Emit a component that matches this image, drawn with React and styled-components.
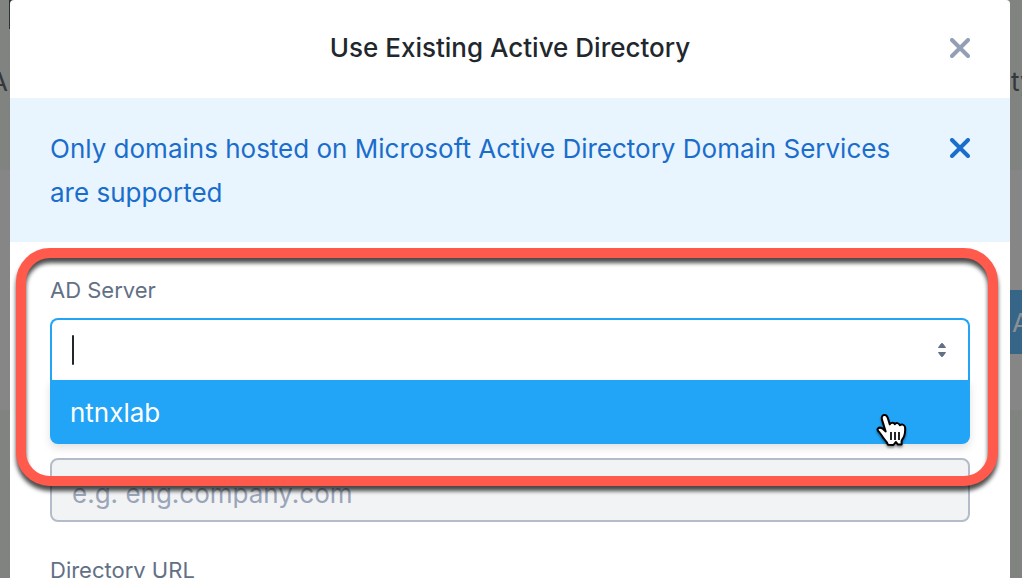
import React from 'react';
import styled, { createGlobalStyle } from 'styled-components';

const GlobalStyle = createGlobalStyle`
  * { box-sizing: border-box; }
  body {
    margin: 0;
    background: #808380;
    font-family: Inter, "Liberation Sans", sans-serif;
    font-size: 26px;
    color: #22272e;
  }
`;

const Page = styled.div`
  position: relative;
  height: 100vh;
  overflow: hidden;
  background: #808380;
`;

const PageHeader = styled.div`
  display: flex;
  justify-content: space-between;
  height: 170px;
  padding-top: 66px;
  line-height: 32px;
  color: #34373b;
`;

const ClippedWord = styled.span`
  display: flex;
  justify-content: ${(p) => (p.$side === 'left' ? 'flex-end' : 'flex-start')};
  width: ${(p) => (p.$side === 'left' ? '8px' : '11px')};
  overflow: hidden;
`;

const PageToolbar = styled.div`
  display: flex;
  justify-content: flex-end;
  height: 240px;
  padding-top: 120px;
  background: #868686;
`;

const PageButton = styled.button`
  width: 12px;
  height: 64px;
  padding: 0 2px;
  border: 0;
  overflow: hidden;
  background: #376587;
  color: #8b9093;
  font: inherit;
  text-align: left;
`;

const PageDivider = styled.div`
  position: absolute;
  top: 0;
  left: 9px;
  width: 6px;
  height: 29px;
  background: #2f3235;
`;

const Modal = styled.section`
  position: absolute;
  inset: 0 12px 0 10px;
  overflow: hidden;
  border-radius: 4px 4px 0 0;
  background: #fff;
`;

const ModalHeader = styled.header`
  display: grid;
  grid-template-columns: 24px 1fr 24px;
  align-items: center;
  height: 98px;
  padding: 0 38px 2px;
`;

const Title = styled.h1`
  grid-column: 2;
  margin: 0;
  font-size: 26px;
  font-weight: 500;
  line-height: 32px;
  text-align: center;
`;

const CloseButton = styled.button`
  display: flex;
  flex: none;
  width: 24px;
  height: 24px;
  padding: 2px;
  border: 0;
  background: none;
  color: ${(p) => (p.$tone === 'info' ? '#1b6dcc' : '#929fb5')};
`;

const Alert = styled.div`
  display: flex;
  justify-content: space-between;
  gap: 24px;
  padding: 29px 38px 27px 40px;
  background: #e8f5ff;
  color: #1b6dcc;

  ${CloseButton} {
    margin-top: 9px;
  }
`;

const AlertText = styled.p`
  max-width: 860px;
  margin: 0;
  line-height: 44px;
`;

const Form = styled.form`
  position: relative;
  display: flex;
  flex-direction: column;
  padding: 32px 40px;
`;

const Label = styled.label`
  margin-bottom: 12px;
  font-size: 22px;
  line-height: 32px;
  color: #627086;
`;

const Combo = styled.div`
  position: relative;
  display: flex;
  align-items: center;
  height: 62px;
  padding: 0 20px;
  border: 2px solid #22a5f7;
  border-bottom: 0;
  border-radius: 8px 8px 0 0;
  background: #fff;
`;

const ComboInput = styled.input`
  flex: 1;
  min-width: 0;
  height: 56px;
  padding: 0;
  border: 0;
  outline: 0;
  background: none;
  font: inherit;
`;

const TextCaret = styled.span`
  width: 2px;
  height: 30px;
  border-radius: 1px;
  background: #22272e;
`;

const OptionList = styled.ul`
  position: relative;
  margin: 0 0 14px;
  padding: 0;
  list-style: none;
  border-radius: 0 0 8px 8px;
  background: #22a5f7;
  box-shadow: 0 4px 8px rgba(0, 0, 0, 0.12);
`;

const Option = styled.li`
  height: 64px;
  padding: 0 20px;
  line-height: 66px;
  color: #fff;
`;

const TextInput = styled.input`
  height: 64px;
  padding: 6px 20px 0;
  border: 2px solid #b4bccb;
  border-radius: 8px;
  background: #f2f3f5;
  font: inherit;

  &::placeholder {
    color: #9aa5b8;
    opacity: 1;
  }
`;

const NextLabel = styled(Label)`
  margin-top: 32px;
`;

const Pointer = styled.svg`
  position: absolute;
  right: 60px;
  bottom: -8px;
  width: 36px;
  height: 40px;
  overflow: visible;
  filter: drop-shadow(0 2px 1px rgba(0, 0, 0, 0.4));
`;

const Highlight = styled.div`
  position: absolute;
  top: 6px;
  left: 6px;
  right: 12px;
  height: 238px;
  border: 10px solid #ff5a4c;
  border-radius: 34px;
  filter: drop-shadow(0 5px 2px rgba(0, 0, 0, 0.7));
  pointer-events: none;
`;

const CloseIcon = () => (
  <svg width="20" height="20" viewBox="0 0 20 20" aria-hidden="true">
    <path d="M2 2 18 18M18 2 2 18" stroke="currentColor" strokeWidth="4" strokeLinecap="round" />
  </svg>
);

const SortIcon = () => (
  <svg width="12" height="16" viewBox="0 0 12 16" aria-hidden="true">
    <path
      d="M2.5 5.5 5.5 1.5h1l3 4zM2.5 10.5 5.5 14.5h1l3-4z"
      fill="#627086"
      stroke="#627086"
      strokeLinejoin="round"
    />
  </svg>
);

export default function App() {
  return (
    <>
      <GlobalStyle />
      <Page>
        <PageHeader>
          <ClippedWord $side="left">A</ClippedWord>
          <ClippedWord $side="right">ty</ClippedWord>
        </PageHeader>
        <PageToolbar>
          <PageButton type="button">A</PageButton>
        </PageToolbar>
        <PageDivider />

        <Modal role="dialog" aria-labelledby="modal-title">
          <ModalHeader>
            <Title id="modal-title">Use Existing Active Directory</Title>
            <CloseButton type="button" aria-label="Close">
              <CloseIcon />
            </CloseButton>
          </ModalHeader>

          <Alert role="status">
            <AlertText>
              Only domains hosted on Microsoft Active Directory Domain Services are supported
            </AlertText>
            <CloseButton type="button" $tone="info" aria-label="Dismiss">
              <CloseIcon />
            </CloseButton>
          </Alert>

          <Form>
            <Label htmlFor="ad-server">AD Server</Label>
            <Combo>
              <TextCaret />
              <ComboInput id="ad-server" type="text" role="combobox" aria-expanded="true" aria-controls="ad-options" />
              <SortIcon />
            </Combo>
            <OptionList id="ad-options" role="listbox">
              <Option role="option" aria-selected="true">ntnxlab</Option>
              <Pointer viewBox="0 0 36 40" aria-hidden="true">
                <path
                  d="M11.6 19.4 L8.2 8.4 C7.2 5.4 8 3.4 10 3 C12 2.6 13.2 4 13.8 6 L15.8 12.4 C16.6 10.4 20 10 20.8 12.2 C22 10.4 25 10.8 25.8 13.2 C27.4 11.8 30.4 12.4 31 15 C31.4 18 31 21.4 30.2 24 C29.6 26 27.8 27.4 27.6 29 L27.6 32.4 L24 32.6 L21.8 30 L19.4 33 L14 32.8 C13.2 30.4 11.4 28.4 9.8 26.6 C8 24.4 7.4 22.4 5.6 20.6 C3.6 18.8 3 17.4 4 16.4 C5.6 15 8.6 16 11.6 19.4 Z"
                  fill="#fff"
                  stroke="#000"
                  strokeWidth="2"
                  strokeLinejoin="round"
                />
                <path d="M17 20v8M21 20v8M25 20v8" stroke="#000" strokeWidth="1.7" />
              </Pointer>
            </OptionList>
            <TextInput type="text" aria-label="Domain" placeholder="e.g. eng.company.com" disabled />
            <NextLabel htmlFor="directory-url">Directory URL</NextLabel>
            <TextInput id="directory-url" type="text" />
            <Highlight />
          </Form>
        </Modal>
      </Page>
    </>
  );
}
